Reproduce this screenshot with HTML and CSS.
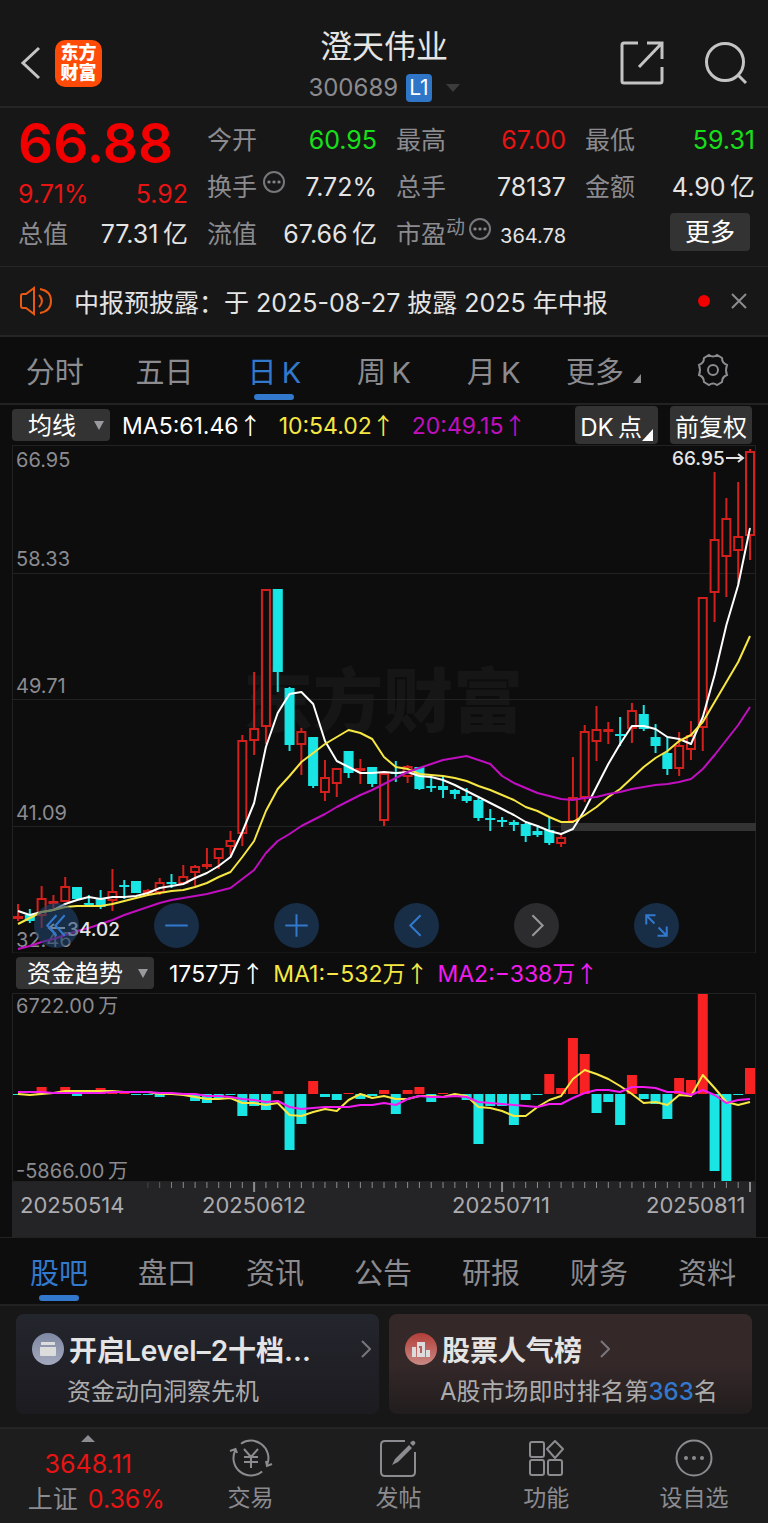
FILE: index.html
```html
<!DOCTYPE html>
<html lang="zh-CN">
<head>
  <meta charset="UTF-8" />
  <meta name="viewport" content="width=device-width, initial-scale=1.0" />
  <title>澄天伟业 300689</title>
  <link rel="stylesheet" href="styles.css">
</head>
<body>
  <header class="header">
    <div class="header-left">
      <button class="icon-btn" aria-label="返回">
        <svg width="22" height="36" viewBox="0 0 22 36"><path class="line" d="M19 3 L3 18 L19 33" /></svg>
      </button>
      <div class="logo"><span>东方</span><span>财富</span></div>
    </div>
    <div class="header-title">
      <h1>澄天伟业</h1>
      <div class="code">300689 <span class="level">L1</span><i class="caret dark"></i></div>
    </div>
    <div class="header-right">
      <button class="icon-btn" aria-label="分享">
        <svg width="44" height="44" viewBox="0 0 44 44"><path class="line" d="M18 2 H4 Q2 2 2 4 V40 Q2 42 4 42 H40 Q42 42 42 40 V26 M27 2 H42 V18 M42 2 L19 26" /></svg>
      </button>
      <button class="icon-btn" aria-label="搜索">
        <svg width="44" height="44" viewBox="0 0 44 44"><circle class="line" cx="21" cy="21" r="18.500" /><path class="line" d="M34 34 L42 42" /></svg>
      </button>
    </div>
  </header>

  <section class="quote">
    <div class="price-cell">
      <div class="price">66.88</div>
      <div class="change"><span>9.71%</span><span>5.92</span></div>
    </div>
    <div class="cell"><span>今开</span><b class="green">60.95</b></div>
    <div class="cell"><span>最高</span><b class="red">67.00</b></div>
    <div class="cell"><span>最低</span><b class="green">59.31</b></div>
    <div class="cell"><span>换手<i class="more-dot"></i></span><b>7.72%</b></div>
    <div class="cell"><span>总手</span><b>78137</b></div>
    <div class="cell"><span>金额</span><b>4.90&thinsp;亿</b></div>
    <div class="cell"><span>总值</span><b>77.31&thinsp;亿</b></div>
    <div class="cell"><span>流值</span><b>67.66&thinsp;亿</b></div>
    <div class="cell"><span>市盈<sup>动</sup><i class="more-dot"></i></span><b class="small">364.78</b></div>
    <div class="cell"><button class="more-btn">更多</button></div>
  </section>

  <section class="notice">
    <svg width="34" height="30" viewBox="0 0 34 30"><path class="horn" d="M2 10 Q2 8 4 8 H7 L15 2 V28 L7 22 H4 Q2 22 2 20 Z M20 9 Q26 15 20 21 M21 3 Q32 5 32 15 Q32 25 21 27" /></svg>
    <a href="#notice">中报预披露：于 2025-08-27 披露 2025 年中报</a>
    <i class="red-dot"></i>
    <button class="icon-btn" aria-label="关闭">
      <svg width="16" height="16" viewBox="0 0 16 16"><path class="line gray" d="M1 1 L15 15 M15 1 L1 15" /></svg>
    </button>
  </section>

  <nav class="tabs">
    <a href="#fs">分时</a>
    <a href="#5d">五日</a>
    <a href="#dk" class="active">日&thinsp;K</a>
    <a href="#wk">周&thinsp;K</a>
    <a href="#mk">月&thinsp;K</a>
    <a href="#more">更多 <i class="corner"></i></a>
    <button class="icon-btn" aria-label="设置">
      <svg width="34" height="34" viewBox="0 0 34 34"><path class="line gray" d="M13 2 Q17 5 21 2 L26 5 Q26 10 31 12 Q29 17 31 22 Q26 24 26 29 L21 32 Q17 29 13 32 L8 29 Q8 24 3 22 Q5 17 3 12 Q8 10 8 5 Z" /><circle class="line gray" cx="17" cy="17" r="5" /></svg>
    </button>
  </nav>

  <main class="charts">
    <div class="bar">
      <label class="picker narrow">
        <select aria-label="主图指标"><option>均线</option></select>
        <i class="caret"></i>
      </label>
      <div class="values">
        <span>MA5:61.46<i>↑</i></span>
        <span class="yellow">10:54.02<i>↑</i></span>
        <span class="purple">20:49.15<i>↑</i></span>
      </div>
      <div class="bar-right">
        <button class="chip">DK&thinsp;点<i class="corner white"></i></button>
        <button class="chip">前复权</button>
      </div>
    </div>

    <div class="chart-box">
      <svg id="kline" viewBox="0 0 744 508"></svg>
      <div class="controls">
        <button aria-label="最早"><svg viewBox="0 0 44 44"><path d="M22 12 L13 22 L22 32 M30 12 L21 22 L30 32" /></svg></button>
        <button aria-label="缩小"><svg viewBox="0 0 44 44"><path d="M11 22 H33" /></svg></button>
        <button aria-label="放大"><svg viewBox="0 0 44 44"><path d="M11 22 H33 M22 11 V33" /></svg></button>
        <button aria-label="向左"><svg viewBox="0 0 44 44"><path d="M26 12 L16 22 L26 32" /></svg></button>
        <button aria-label="向右" class="off"><svg viewBox="0 0 44 44"><path d="M18 12 L28 22 L18 32" /></svg></button>
        <button aria-label="全屏"><svg viewBox="0 0 44 44"><path d="M12 21 V12 H21 M12 12 L20 20 M32 23 V32 H23 M24 24 L32 32" /></svg></button>
      </div>
    </div>

    <div class="bar">
      <label class="picker wide">
        <select aria-label="副图指标"><option>资金趋势</option></select>
        <i class="caret"></i>
      </label>
      <div class="values tight">
        <span>1757万<i>↑</i></span>
        <span class="yellow">MA1:−532万<i>↑</i></span>
        <span class="magenta">MA2:−338万<i>↑</i></span>
      </div>
    </div>
    <div class="chart-box">
      <svg id="fund" viewBox="0 0 744 189"></svg>
    </div>
    <svg id="axis" viewBox="0 0 744 55"></svg>
  </main>

  <nav class="tabs lower">
    <a href="#guba" class="active">股吧</a>
    <a href="#pankou">盘口</a>
    <a href="#zixun">资讯</a>
    <a href="#gonggao">公告</a>
    <a href="#yanbao">研报</a>
    <a href="#caiwu">财务</a>
    <a href="#ziliao">资料</a>
  </nav>

  <section class="cards">
    <a href="#level2" class="card blue-card">
      <div class="card-title">
        <svg width="32" height="32" viewBox="0 0 32 32">
          <defs><linearGradient id="g1" x2="0" y2="1"><stop offset="0" stop-color="#7f88a3" /><stop offset="1" stop-color="#a3a9bd" /></linearGradient></defs>
          <circle cx="16" cy="16" r="16" fill="url(#g1)" /><path fill="#dcdcdc" d="M9 9 H23 V12 H9 Z M8 14 H24 V22 Q24 23 23 23 H9 Q8 23 8 22 Z" />
        </svg>
        <strong>开启Level–2十档...</strong>
        <svg class="arrow end" width="10" height="18" viewBox="0 0 10 18"><path d="M1 1 L9 9 L1 17" /></svg>
      </div>
      <p>资金动向洞察先机</p>
    </a>
    <a href="#rank" class="card red-card">
      <div class="card-title">
        <svg width="32" height="32" viewBox="0 0 32 32">
          <defs><linearGradient id="g2" x2="0" y2="1"><stop offset="0" stop-color="#b23e38" /><stop offset="1" stop-color="#c98984" /></linearGradient></defs>
          <circle cx="16" cy="16" r="16" fill="url(#g2)" /><path fill="#dcdcdc" d="M7 14 H11 V24 H7 Z M12 9 H20 V24 H12 Z M21 17 H25 V24 H21 Z" /><path d="M14 14 H16 V20" stroke="#b85c57" stroke-width="2" fill="none" />
        </svg>
        <strong>股票人气榜</strong>
        <svg class="arrow" width="10" height="18" viewBox="0 0 10 18"><path d="M1 1 L9 9 L1 17" /></svg>
      </div>
      <p>A股市场即时排名第<b>363</b>名</p>
    </a>
  </section>

  <footer class="footer">
    <a href="#index" class="index">
      <i class="up"></i>
      <span class="red">3648.11</span>
      <span>上证 <em class="red">0.36%</em></span>
    </a>
    <a href="#trade" class="foot-item">
      <svg width="44" height="40" viewBox="0 0 44 40"><path class="line gray" d="M12 5.700 A17.500 17.500 0 0 1 38.400 26 M33.200 33.400 A17.500 17.500 0 0 1 6.100 12.600 M1 13 L6.500 11 L8 15 M37 23 L38 28 L43 26 M15 11 L22 19 L29 11 M22 19 V30 M15 19 H29 M15 24 H29" /></svg>
      <span>交易</span>
    </a>
    <a href="#post" class="foot-item">
      <svg width="40" height="40" viewBox="0 0 40 40"><path class="line gray" d="M27 3 H7 Q3 3 3 7 V34 Q3 38 7 38 H33 Q37 38 37 34 V14" /><path fill="#8b8b90" d="M14 27 L17 21 L31 7 L34 10 L20 24 Z M32 5 L34 3 Q36 2 37 4 Q38 5 37 6 L35 8 Z" /></svg>
      <span>发帖</span>
    </a>
    <a href="#tools" class="foot-item">
      <svg width="40" height="40" viewBox="0 0 40 40"><g class="line gray"><rect x="4" y="4" width="14" height="15" rx="2" /><rect x="4" y="22" width="14" height="15" rx="2" /><rect x="22" y="22" width="14" height="15" rx="2" /><path d="M29 3 L37 11 L29 20 L21 11 Z" stroke-linejoin="round" /></g></svg>
      <span>功能</span>
    </a>
    <a href="#fav" class="foot-item">
      <svg width="40" height="40" viewBox="0 0 40 40"><circle class="line gray" cx="20" cy="20" r="17.500" /><g fill="#8b8b90"><circle cx="12" cy="20" r="2" /><circle cx="20" cy="20" r="2" /><circle cx="28" cy="20" r="2" /></g></svg>
      <span>设自选</span>
    </a>
  </footer>

  <script src="chart.js"></script>
</body>
</html>
```
FILE: styles.css
```css
* {
  box-sizing: border-box;
}
body {
  margin: 0;
  background: #171717;
  color: #e4e4e4;
  font-family: Inter, "Noto Sans CJK SC", sans-serif;
  font-size: 25px;
}
a {
  color: inherit;
  text-decoration: none;
}
button, select {
  font: inherit;
  color: inherit;
  border: none;
  background: none;
  padding: 0;
  cursor: pointer;
}
i, em {
  font-style: normal;
}
svg {
  display: block;
}
.icon-btn {
  display: flex;
}
.line {
  fill: none;
  stroke: #c4c4c4;
  stroke-width: 3;
}
.line.gray {
  stroke: #8b8b90;
  stroke-width: 2;
}
.red {
  color: #e81414;
}
.green {
  color: #17e01b;
}
.caret {
  width: 0;
  border: 5px solid transparent;
  border-top: 9px solid #9a9a9e;
  border-bottom: none;
}
.caret.dark {
  border-width: 8px 7px 0;
  border-top-color: #3c3c3c;
  margin-left: 14px;
}
.corner {
  display: inline-block;
  border-left: 8px solid transparent;
  border-bottom: 9px solid #8b8b90;
}
.corner.white {
  border-left-width: 11px;
  border-bottom: 12px solid #fff;
}

/* header */
.header {
  display: grid;
  grid-template-columns: 1fr auto 1fr;
  align-items: center;
  height: 108px;
  padding: 20px 20px 0;
  border-bottom: 2px solid #262626;
}
.header-left, .header-right {
  display: flex;
  align-items: center;
  gap: 13px;
}
.header-right {
  justify-content: flex-end;
  gap: 40px;
}
.logo {
  display: flex;
  flex-direction: column;
  align-items: center;
  justify-content: center;
  width: 47px;
  height: 47px;
  border-radius: 10px;
  background: #ff4a08;
  color: #fff;
  font-size: 18px;
  font-weight: 900;
  line-height: 20px;
}
.header-title {
  padding-top: 4px;
  text-align: center;
}
h1 {
  margin: 0;
  font-size: 32px;
  font-weight: 400;
  line-height: 46px;
}
.code {
  display: flex;
  align-items: center;
  justify-content: center;
  color: #8b8b90;
  font-size: 24px;
  line-height: 36px;
}
.level {
  margin-left: 8px;
  padding: 0 3px;
  border-radius: 4px;
  background: #2f75c8;
  color: #fff;
  font-size: 21px;
  line-height: 28px;
}

/* quote */
.quote {
  display: grid;
  grid-template-columns: repeat(4, 1fr);
  grid-template-rows: repeat(3, 47px);
  column-gap: 19px;
  height: 159px;
  padding: 8px 13px 0 18px;
  border-bottom: 1px solid #262626;
}
.price-cell {
  grid-row: span 2;
  color: #f20000;
}
.price {
  font-size: 55px;
  font-weight: 600;
  line-height: 54px;
}
.change {
  display: flex;
  justify-content: space-between;
  color: #e81414;
  line-height: 48px;
}
.cell {
  display: flex;
  align-items: center;
  justify-content: space-between;
  line-height: 32px;
  white-space: nowrap;
}
.cell span {
  display: flex;
  align-items: center;
  color: #8b8b90;
}
.cell b {
  font-weight: 400;
}
.cell .small {
  padding-top: 5px;
  font-size: 20px;
}
.cell sup {
  align-self: flex-start;
  font-size: 19px;
  line-height: 20px;
}
.more-dot {
  width: 22px;
  height: 22px;
  margin: 0 0 9px 6px;
  border: 2px solid #77777b;
  border-radius: 50%;
  background: radial-gradient(circle, #8b8b90 1px, transparent 2px) 50% 50% / 5px 18px;
  background-clip: content-box;
  padding: 0 1px;
}
sup + .more-dot {
  margin-left: 4px;
}
.more-btn {
  width: 80px;
  height: 38px;
  margin: 0 5px 4px auto;
  border-radius: 4px;
  background: #333;
  color: #fff;
  line-height: 38px;
}

/* notice */
.notice {
  display: flex;
  align-items: center;
  height: 70px;
  padding: 0 21px 0 19px;
  border-bottom: 2px solid #262626;
}
.notice a {
  margin-left: 21px;
  flex: 1;
}
.horn {
  fill: none;
  stroke: #e95a14;
  stroke-width: 2;
}
.red-dot {
  width: 12px;
  height: 12px;
  margin-right: 21px;
  border-radius: 50%;
  background: #f20000;
}

/* tabs */
.tabs {
  display: grid;
  grid-template-columns: repeat(7, 1fr);
  height: 68px;
  background: #0d0d0d;
  border-bottom: 2px solid #222;
  color: #8b8b90;
  font-size: 29px;
}
.tabs > * {
  display: flex;
  align-items: center;
  justify-content: center;
  position: relative;
  white-space: nowrap;
}
.tabs .active {
  color: #3279cd;
}
.tabs .active::after {
  content: "";
  position: absolute;
  bottom: 3px;
  width: 40px;
  height: 6px;
  border-radius: 3px;
  background: #3279cd;
}
.tabs .corner {
  align-self: flex-end;
  margin: 0 0 20px 9px;
}
.tabs.lower {
  height: 69px;
  padding: 0 7px 0 5px;
  border-top: 1px solid #222;
}

/* charts */
.charts {
  padding: 0 12px;
  background: #0d0d0d;
}
.bar {
  display: flex;
  align-items: center;
  height: 40px;
  font-size: 23px;
}
.picker {
  display: flex;
  align-items: center;
  justify-content: space-between;
  height: 32px;
  padding: 0 6px 0 16px;
  border-radius: 4px;
  background: #333;
  color: #fff;
}
.picker select {
  appearance: none;
  flex: 1;
  min-width: 0;
  font-size: 24px;
}
.narrow {
  width: 98px;
}
.wide {
  width: 138px;
  margin-left: 4px;
  padding-left: 11px;
}
.values {
  display: flex;
  gap: 17px;
  margin-left: 12px;
  color: #fff;
  line-height: 32px;
  white-space: nowrap;
}
.values i {
  font-family: "Noto Sans CJK SC", sans-serif;
}
.values.tight {
  gap: 9px;
  margin-left: 15px;
}
.values .yellow {
  color: #f7e743;
}
.values .purple {
  color: #c00fc0;
}
.values .magenta {
  color: #f31cf0;
}
.bar-right {
  display: flex;
  gap: 12px;
  margin: 0 4px 0 auto;
}
.chip {
  display: flex;
  align-items: center;
  justify-content: center;
  height: 38px;
  padding: 0 5px;
  border-radius: 4px;
  background: #333;
  color: #fff;
  font-size: 24px;
}
.chip .corner {
  align-self: flex-end;
  margin-bottom: 3px;
}
.chart-box {
  position: relative;
}
.controls {
  position: absolute;
  left: 0;
  right: 0;
  bottom: 5px;
  display: flex;
  gap: 75px;
  padding-left: 22px;
}
.controls button {
  width: 45px;
  height: 45px;
  border-radius: 50%;
  background: rgba(31, 67, 108, 0.6);
}
.controls path {
  fill: none;
  stroke: #3279cd;
  stroke-width: 2;
}
.controls .off {
  background: #2c2c2e;
}
.controls .off path {
  stroke: #98989c;
}
#kline, #fund, #axis {
  width: 100%;
}
#axis {
  background: #242426;
}
.grid {
  fill: none;
  stroke: #222;
  stroke-width: 1;
}
.up-hollow {
  fill: #0d0d0d;
  stroke: #d3201d;
  stroke-width: 2;
}
.wick-up {
  stroke: #d3201d;
  stroke-width: 2;
}
.down, .wick-down {
  fill: #18e5e4;
  stroke: #18e5e4;
}
.wick-down {
  stroke-width: 2;
}
.fund-up {
  fill: #f82222;
}
.fund-down {
  fill: #18e5e4;
}
.ma {
  fill: none;
  stroke-width: 2;
  stroke-linejoin: round;
}
.label {
  fill: #8b8b90;
  font-size: 20px;
}
.mark {
  fill: #e4e4e4;
  font-size: 19px;
  font-weight: 500;
}
.mark-line {
  fill: none;
  stroke: #e4e4e4;
  stroke-width: 2;
}
.watermark {
  fill: #161616;
  font-size: 70px;
  font-weight: 900;
}
.date {
  fill: #acacb0;
  font-size: 22px;
}

/* cards */
.cards {
  display: grid;
  grid-template-columns: 1fr 1fr;
  gap: 10px;
  padding: 8px 16px 13px;
}
.card {
  height: 100px;
  padding: 16px 8px 0 16px;
  border-radius: 8px;
}
.blue-card {
  background: linear-gradient(#24262d, #1c1b20);
}
.red-card {
  background: linear-gradient(#352829 50%, #211d1d);
}
.card-title {
  display: flex;
  align-items: center;
  height: 38px;
}
.card-title strong {
  margin-left: 5px;
  font-size: 28px;
  font-weight: 600;
}
.arrow {
  margin-left: 18px;
  fill: none;
  stroke: #77777b;
  stroke-width: 2;
}
.arrow.end {
  margin-left: auto;
}
.card p {
  margin: 6px 0 0 35px;
  color: #acacac;
  font-size: 24px;
  line-height: 36px;
}
.card b {
  color: #3279cd;
  font-weight: 500;
}

/* footer */
.footer {
  display: flex;
  height: 96px;
  border-top: 2px solid #242424;
  background: #1d1d1d;
  color: #8b8b90;
}
.index {
  display: flex;
  flex-direction: column;
  align-items: center;
  width: 23%;
  padding: 6px 0 0 16px;
  font-size: 25px;
}
.index span {
  line-height: 35px;
  white-space: nowrap;
}
.index span.red {
  padding-right: 16px;
}
.index em {
  margin-left: 3px;
}
.index .up {
  margin: 0 16px 5px 0;
  border: 7px solid transparent;
  border-top: none;
  border-bottom: 7px solid #8b8b90;
}
.foot-item {
  display: flex;
  flex: 1;
  flex-direction: column;
  align-items: center;
  padding-top: 9px;
  font-size: 23px;
}
.foot-item span {
  line-height: 40px;
}
```
FILE: chart.js
```js
// one candle: [high, body top, body bottom, low, up]
const candles = [
  [904,916,919,921,1],[909,915,921,923,0],[886,898,916,928,1],[895,901,903,909,1],[877,886,902,902,1],
  [887,887,899,899,0],[895,903,906,907,0],[890,899,907,909,0],[869,891,901,911,1],[880,885,886,899,0],
  [881,881,893,893,0],[889,890,894,896,1],[878,882,893,895,1],[874,882,883,888,0],[865,876,884,884,1],
  [865,866,873,886,1],[848,864,867,869,1],[848,848,859,869,1],[831,840,847,855,1],[735,740,834,846,1],
  [672,728,741,755,1],[589,589,727,744,1],[589,589,672,692,0],[687,688,745,751,0],[728,731,745,775,1],
  [737,737,786,788,0],[760,777,793,801,1],[768,768,784,797,1],[751,751,773,778,0],[759,768,771,784,1],
  [767,767,784,787,0],[771,773,821,826,1],[761,772,773,782,0],[765,766,777,783,1],[767,767,789,790,0],
  [777,786,787,792,0],[777,786,790,798,0],[789,790,794,799,0],[788,796,801,803,0],[798,800,818,821,0],
  [809,818,819,831,0],[817,820,821,827,0],[820,822,825,831,0],[823,824,836,842,0],[827,831,835,837,0],
  [817,830,843,845,0],[834,837,844,847,1],[757,797,822,823,1],[725,731,798,802,1],[706,729,742,761,1],
  [722,729,732,744,1],[717,734,735,746,0],[703,710,729,743,1],[705,714,729,731,0],[724,737,746,753,0],
  [737,753,769,775,0],[732,745,769,776,1],[721,735,750,760,1],[597,597,728,751,1],[472,539,593,622,1],
  [498,518,557,597,1],[482,536,551,585,1],[449,451,536,560,1]
];

const ma5 = [911,915,912,910,904,900,897,899,897,897,896,893,888,886,884,878,873,866,857,832,803,747,713,694,692,704,741,761,767,773,773,772,773,772,776,777,780,785,791,797,803,809,815,822,826,831,834,829,810,787,764,744,726,726,729,737,739,744,717,675,625,585,528];
const ma10 = [924,918,912,910,907,906,906,906,904,901,898,895,893,891,890,887,883,877,872,857,841,811,789,776,762,753,744,737,730,733,739,757,767,769,774,775,776,778,781,786,790,795,800,807,811,817,822,822,815,807,797,789,778,767,758,751,741,735,722,702,682,662,636];
const ma20 = [949,946,942,939,935,931,928,924,920,915,911,907,903,900,898,896,894,891,888,879,870,853,841,834,826,820,814,807,801,795,790,784,778,772,768,764,760,758,756,760,764,776,783,788,793,796,799,800,798,797,794,792,789,787,785,784,782,779,769,755,740,725,707];

const flow = [-1,0,7,1,7,-2,1,6,2,2,-1,0,-3,-1,-1,-7,-9,-4,-1,-22,-12,-16,3,-56,-30,13,-3,-6,1,-5,-2,4,-20,4,7,-8,1,-1,-6,-50,-12,-12,-31,-6,-1,20,6,56,40,-19,-8,-31,19,-5,-10,-25,16,14,100,-77,-87,-1,26];
const flow1 = [1094,1095,1094,1093,1091,1091,1091,1091,1091,1092,1092,1092,1094,1094,1095,1097,1099,1099,1098,1103,1103,1105,1103,1115,1116,1112,1109,1111,1100,1094,1098,1096,1099,1099,1096,1096,1097,1094,1096,1107,1108,1111,1116,1116,1107,1100,1096,1079,1070,1074,1079,1086,1094,1103,1102,1105,1095,1096,1075,1088,1102,1105,1102];
const flow2 = [1092,1092,1092,1093,1093,1093,1093,1093,1092,1092,1092,1092,1093,1093,1094,1094,1096,1096,1097,1099,1100,1102,1101,1107,1109,1108,1107,1107,1107,1105,1105,1103,1105,1099,1096,1097,1097,1096,1097,1102,1103,1104,1105,1106,1107,1104,1104,1098,1093,1090,1090,1092,1087,1087,1088,1092,1092,1095,1090,1095,1103,1100,1099];

const STEP = 732 / 62;
const K_TOP = 445;
const F_TOP = 993;
const ZERO = 101;
const x = i => 6 + i * STEP;

function line(values, top, color) {
  const points = values.map((v, i) => `${x(i).toFixed(1)},${v - top}`).join(' ');
  return `<polyline class="ma" stroke="${color}" points="${points}" />`;
}

function drawKline() {
  let s = '<text class="watermark" x="231" y="282">东方财富</text>';
  s += '<path class="grid" d="M.5 .5 H743.5 V508 H.5 Z M0 128.5 H744 M0 254.5 H744 M0 381.5 H744" />';
  s += '<rect x="549" y="378" width="195" height="8" fill="#333" />';
  s += ['66.95', '58.33', '49.71', '41.09', '32.46']
    .map((t, i) => `<text class="label" x="4" y="${[22, 121, 248, 375, 502][i]}">${t}</text>`).join('');
  candles.forEach(([high, top, bottom, low, up], i) => {
    const cx = x(i);
    const h = bottom - top;
    s += `<path class="${up ? 'wick-up' : 'wick-down'}" d="M${cx} ${high - K_TOP} V${top - K_TOP} M${cx} ${bottom - K_TOP} V${low - K_TOP}" />`;
    if (up) {
      s += `<rect class="up-hollow" x="${cx - 4}" y="${top - K_TOP + 1}" width="8" height="${Math.max(h - 2, 1)}" />`;
    } else {
      s += `<rect class="down" x="${cx - 4.5}" y="${top - K_TOP + 0.5}" width="9" height="${Math.max(h - 1, 1)}" />`;
    }
  });
  s += line(ma5, K_TOP, '#fff') + line(ma10, K_TOP, '#f7e743') + line(ma20, K_TOP, '#c00fc0');
  s += '<text class="mark" x="660" y="20">66.95</text><path class="mark-line" d="M714 13 H730 M726 9 L731 13 L726 17" />';
  s += '<text class="mark" x="55" y="491">34.02</text><path class="mark-line" d="M53 483 H38 M42 479 L37 483 L42 487" />';
  document.getElementById('kline').innerHTML = s;
}

function drawFund() {
  let s = '<path class="grid" d="M.5 .5 H743.5 V188.5 H.5 Z" />';
  flow.forEach((v, i) => {
    const h = Math.max(Math.abs(v), 1);
    s += `<rect class="${v > 0 ? 'fund-up' : 'fund-down'}" x="${x(i) - 5}" y="${v > 0 ? ZERO - h : ZERO}" width="10" height="${h}" />`;
  });
  s += line(flow1, F_TOP, '#f7e743') + line(flow2, F_TOP, '#f31cf0');
  s += '<text class="label" x="4" y="20">6722.00\u2009万</text><text class="label" x="4" y="185">-5866.00\u2009万</text>';
  document.getElementById('fund').innerHTML = s;
}

function drawAxis() {
  let s = '';
  for (let i = 11; i < 63; i++) {
    const long = i === 20 || i === 41 || i === 62;
    s += `<path stroke="#8b8b90" stroke-width="${long ? 2 : 1}" opacity="${Math.min(1, (i - 10) * 0.3)}" d="M${x(i)} 0 V${long ? 10 : 6}" />`;
  }
  const dates = [['20250514', 8], ['20250612', 190], ['20250711', 440], ['20250811', 634]];
  s += dates.map(d => `<text class="date" x="${d[1]}" y="31">${d[0]}</text>`).join('');
  document.getElementById('axis').innerHTML = s;
}

drawKline();
drawFund();
drawAxis();
```
